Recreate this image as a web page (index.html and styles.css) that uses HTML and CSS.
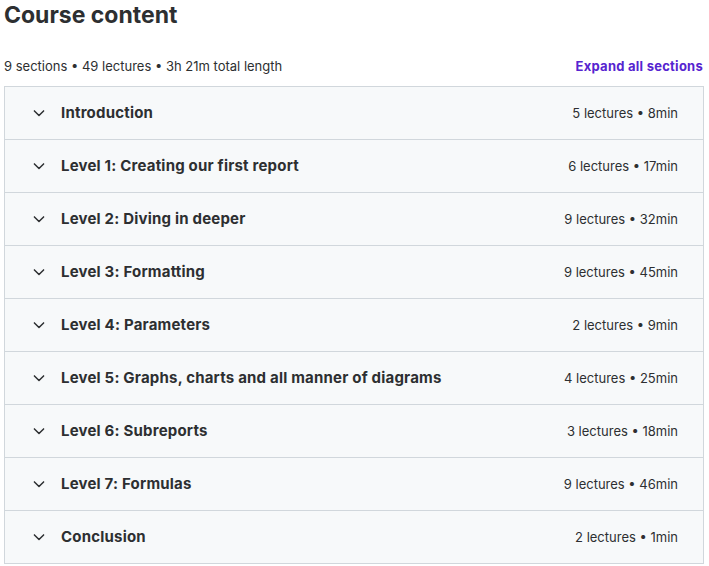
FILE: index.html
```html
<!DOCTYPE html>
<html lang="en">
<head>
    <meta charset="UTF-8">
    <title>Course content</title>
    <link rel="stylesheet" href="styles.css">
</head>
<body>
<div class="curriculum">
    <h2 class="title">Course content</h2>
    <div class="summary">
        <span>9 sections • 49 lectures • 3h 21m total length</span>
        <a href="#" class="expand">Expand all sections</a>
    </div>

    <div class="sections">
        <div class="section">
            <span class="chevron"><svg viewBox="0 0 24 24"><path d="M6.5 9.5l5.5 5.5 5.5-5.5"/></svg></span>
            <span class="name">Introduction</span>
            <span class="meta">5 lectures • 8min</span>
        </div>
        <div class="section">
            <span class="chevron"><svg viewBox="0 0 24 24"><path d="M6.5 9.5l5.5 5.5 5.5-5.5"/></svg></span>
            <span class="name">Level 1: Creating our first report</span>
            <span class="meta">6 lectures • 17min</span>
        </div>
        <div class="section">
            <span class="chevron"><svg viewBox="0 0 24 24"><path d="M6.5 9.5l5.5 5.5 5.5-5.5"/></svg></span>
            <span class="name">Level 2: Diving in deeper</span>
            <span class="meta">9 lectures • 32min</span>
        </div>
        <div class="section">
            <span class="chevron"><svg viewBox="0 0 24 24"><path d="M6.5 9.5l5.5 5.5 5.5-5.5"/></svg></span>
            <span class="name">Level 3: Formatting</span>
            <span class="meta">9 lectures • 45min</span>
        </div>
        <div class="section">
            <span class="chevron"><svg viewBox="0 0 24 24"><path d="M6.5 9.5l5.5 5.5 5.5-5.5"/></svg></span>
            <span class="name">Level 4: Parameters</span>
            <span class="meta">2 lectures • 9min</span>
        </div>
        <div class="section">
            <span class="chevron"><svg viewBox="0 0 24 24"><path d="M6.5 9.5l5.5 5.5 5.5-5.5"/></svg></span>
            <span class="name">Level 5: Graphs, charts and all manner of diagrams</span>
            <span class="meta">4 lectures • 25min</span>
        </div>
        <div class="section">
            <span class="chevron"><svg viewBox="0 0 24 24"><path d="M6.5 9.5l5.5 5.5 5.5-5.5"/></svg></span>
            <span class="name">Level 6: Subreports</span>
            <span class="meta">3 lectures • 18min</span>
        </div>
        <div class="section">
            <span class="chevron"><svg viewBox="0 0 24 24"><path d="M6.5 9.5l5.5 5.5 5.5-5.5"/></svg></span>
            <span class="name">Level 7: Formulas</span>
            <span class="meta">9 lectures • 46min</span>
        </div>
        <div class="section">
            <span class="chevron"><svg viewBox="0 0 24 24"><path d="M6.5 9.5l5.5 5.5 5.5-5.5"/></svg></span>
            <span class="name">Conclusion</span>
            <span class="meta">2 lectures • 1min</span>
        </div>
    </div>
</div>
</body>
</html>
```

FILE: styles.css
```css
body {
    margin: 0;
    padding: 0 5px 0 4px;
    font-family: Inter, "Noto Sans", sans-serif;
    color: #2d2f31;
    background-color: #fff;
}

.title {
    margin: 0;
    font-size: 23px;
    line-height: 30px;
    font-weight: 700;
}

.summary {
    display: flex;
    justify-content: space-between;
    align-items: center;
    margin-top: 24px;
    height: 24px;
    font-size: 13px;
    margin-bottom: 8px;
}

.summary .expand {
    color: #5624d0;
    font-weight: 700;
    text-decoration: none;
    letter-spacing: 0.25px;
    margin-right: 1px;
}

.sections {
    border: 1px solid #d1d7dc;
    border-bottom: none;
}

.section {
    display: flex;
    align-items: center;
    height: 51px;
    padding: 0 25px 1px 24px;
    background-color: #f7f9fa;
    border-bottom: 1px solid #d1d7dc;
}

.chevron {
    width: 20px;
    height: 20px;
    margin-right: 12px;
}

.chevron svg {
    width: 20px;
    height: 20px;
    fill: none;
    stroke: #2d2f31;
    stroke-width: 1.8;
    stroke-linecap: round;
    stroke-linejoin: round;
}

.name {
    flex: 1;
    font-size: 15px;
    font-weight: 700;
    letter-spacing: 0.2px;
}

.meta {
    font-size: 13px;
}
```
